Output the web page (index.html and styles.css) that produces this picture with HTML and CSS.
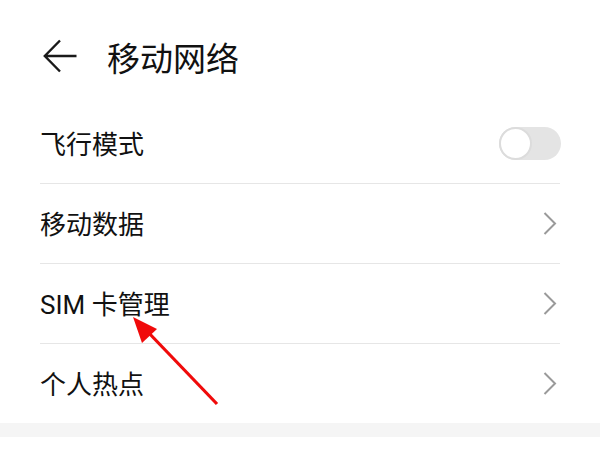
FILE: index.html
```html
<!DOCTYPE html>
<html lang="zh-CN">

<head>
    <meta charset="UTF-8">
    <meta name="viewport" content="width=device-width, initial-scale=1.0">
    <title>移动网络</title>
    <link rel="stylesheet" href="styles.css">
</head>

<body>
    <!-- 顶部标题栏 -->
    <div class="header">
        <svg class="back" width="34" height="34" viewBox="0 0 34 34">
            <path d="M17 1.5 L1.8 17 L17 32.5 M1.8 17 H33.5" fill="none" stroke="#1a1a1a" stroke-width="2.4"/>
        </svg>
        <h1 class="title">移动网络</h1>
    </div>

    <!-- 设置列表 -->
    <ul class="list">
        <li class="item">
            <span class="label">飞行模式</span>
            <span class="switch"><span class="knob"></span></span>
        </li>
        <li class="item">
            <span class="label">移动数据</span>
            <svg class="chevron" width="14" height="23" viewBox="0 0 14 23">
                <path d="M1.5 1 L12 11.5 L1.5 22" fill="none" stroke="#9a9a9a" stroke-width="2"/>
            </svg>
        </li>
        <li class="item">
            <span class="label">SIM 卡管理</span>
            <svg class="chevron" width="14" height="23" viewBox="0 0 14 23">
                <path d="M1.5 1 L12 11.5 L1.5 22" fill="none" stroke="#9a9a9a" stroke-width="2"/>
            </svg>
        </li>
        <li class="item last">
            <span class="label">个人热点</span>
            <svg class="chevron" width="14" height="23" viewBox="0 0 14 23">
                <path d="M1.5 1 L12 11.5 L1.5 22" fill="none" stroke="#9a9a9a" stroke-width="2"/>
            </svg>
        </li>
    </ul>
    <div class="band"></div>

    <!-- 红色标注箭头 -->
    <svg class="mark" width="600" height="450" viewBox="0 0 600 450">
        <line x1="217" y1="404" x2="146" y2="330" stroke="#f00a0a" stroke-width="3.2"/>
        <polygon points="133,317 157,329 142,343" fill="#f00a0a"/>
    </svg>
</body>

</html>
```

FILE: styles.css
```css
* {
    margin: 0;
    padding: 0;
}

body {
    width: 600px;
    height: 450px;
    background-color: #fff;
    font-family: Roboto, "Noto Sans CJK SC", sans-serif;
    color: #111;
    position: relative;
    overflow: hidden;
}

/* 标题栏 */
.header {
    height: 94px;
    padding: 10px 0 0 43px;
    display: flex;
    align-items: center;
}

.back {
    display: block;
    margin-top: -2px;
}

.title {
    font-family: "Noto Sans CJK SC", sans-serif;
    font-weight: normal;
    font-size: 33px;
    line-height: 40px;
    margin-left: 30px;
    color: #111;
}

/* 列表 */
.list {
    list-style: none;
    margin: 0 40px;
}

.item {
    height: 79px;
    border-bottom: 1px solid #e6e6e6;
    display: flex;
    align-items: center;
    justify-content: space-between;
}

.item.last {
    border-bottom: none;
}

.label {
    font-size: 26px;
    line-height: 34px;
    padding-top: 3px;
}

.chevron {
    display: block;
    margin-right: 3px;
}

/* 开关 */
.switch {
    width: 62px;
    height: 33px;
    border-radius: 17px;
    background-color: #e4e4e4;
    display: flex;
    align-items: center;
    margin-right: -1px;
}

.knob {
    width: 29px;
    height: 29px;
    border-radius: 50%;
    background-color: #fff;
    border: 2px solid #dcdcdc;
}

/* 底部灰色分隔 */
.band {
    height: 14px;
    background-color: #f5f5f5;
}

/* 标注箭头 */
.mark {
    position: absolute;
    left: 0;
    top: 0;
}
```
